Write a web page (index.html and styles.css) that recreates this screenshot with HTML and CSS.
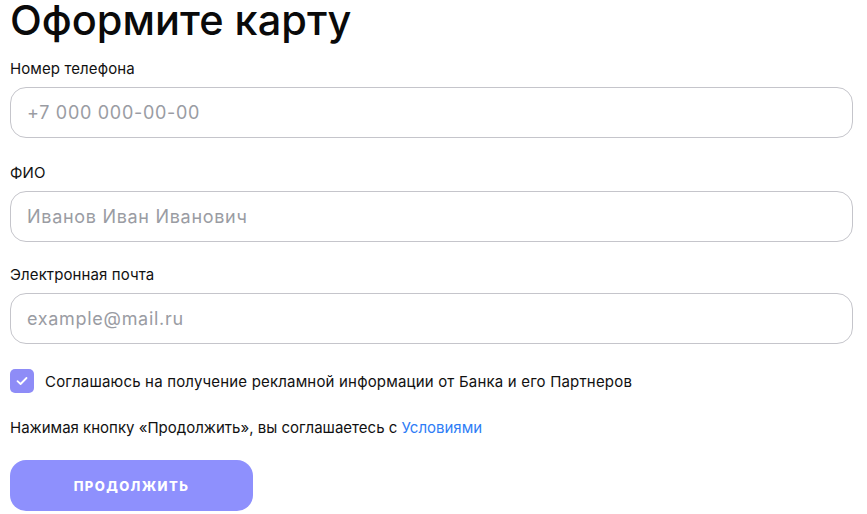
FILE: index.html
```html
<!DOCTYPE html>
<html lang="ru">
<head>
<meta charset="utf-8">
<link rel="stylesheet" href="styles.css">
</head>
<body>
<form class="form">
  <h1 class="title">Оформите карту</h1>
  <div class="field">
    <label class="label">Номер телефона</label>
    <input class="input" type="text" placeholder="+7 000 000-00-00">
  </div>
  <div class="field">
    <label class="label">ФИО</label>
    <input class="input" type="text" placeholder="Иванов Иван Иванович">
  </div>
  <div class="field field-last">
    <label class="label">Электронная почта</label>
    <input class="input" type="text" placeholder="example@mail.ru">
  </div>
  <div class="agree">
    <span class="check">
      <svg width="14" height="14" viewBox="0 0 14 14"><path d="M2.5 7.2 L5.6 10 L11.5 4" fill="none" stroke="#fff" stroke-width="1.8" stroke-linecap="round" stroke-linejoin="round"/></svg>
    </span>
    <span class="agree-text">Соглашаюсь на получение рекламной информации от Банка и его Партнеров</span>
  </div>
  <p class="terms">Нажимая кнопку «Продолжить», вы соглашаетесь с <a class="link" href="#">Условиями</a></p>
  <button class="btn" type="button">ПРОДОЛЖИТЬ</button>
</form>
</body>
</html>
```

FILE: styles.css
```css
* { box-sizing: border-box; }
html, body { margin: 0; padding: 0; background: #fff; }
body {
  font-family: Inter, "Liberation Sans", Arial, sans-serif;
  color: #111;
}
.form {
  width: 843px;
  margin-left: 10px;
  display: flex;
  flex-direction: column;
}
.title {
  margin: 0;
  font-size: 41.5px;
  line-height: 40px;
  font-weight: 500;
  letter-spacing: 0;
  color: #0a0a0a;
}
.field {
  display: flex;
  flex-direction: column;
}
.field + .field { margin-top: 26px; }
.field + .field-last { margin-top: 24px; }
.title + .field { margin-top: 20px; }
.label {
  font-size: 15px;
  line-height: 18px;
  letter-spacing: 0.1px;
  margin-bottom: 9px;
  color: #111;
}
.input {
  height: 51px;
  border: 1px solid #c5c5cb;
  border-radius: 16px;
  padding: 0 16px;
  font-family: inherit;
  font-size: 18px;
  letter-spacing: 0.7px;
  color: #111;
  outline: none;
}
.input::placeholder { color: #9a9ca3; }
.agree {
  display: flex;
  align-items: center;
  gap: 11px;
  margin-top: 25px;
}
.check {
  width: 24px;
  height: 24px;
  border-radius: 5px;
  background: #8e8cf7;
  display: flex;
  align-items: center;
  justify-content: center;
}
.agree-text {
  font-size: 15px;
  letter-spacing: 0.18px;
  color: #111;
}
.terms {
  margin: 26px 0 0 0;
  font-size: 15px;
  line-height: 18px;
  letter-spacing: 0;
  color: #111;
}
.link { color: #2f7df6; text-decoration: none; }
.btn {
  margin-top: 23px;
  width: 243px;
  height: 51px;
  border: none;
  border-radius: 16px;
  background: #8e90fd;
  color: #fff;
  font-family: inherit;
  font-weight: 800;
  font-size: 13px;
  letter-spacing: 1.4px;
}
```
